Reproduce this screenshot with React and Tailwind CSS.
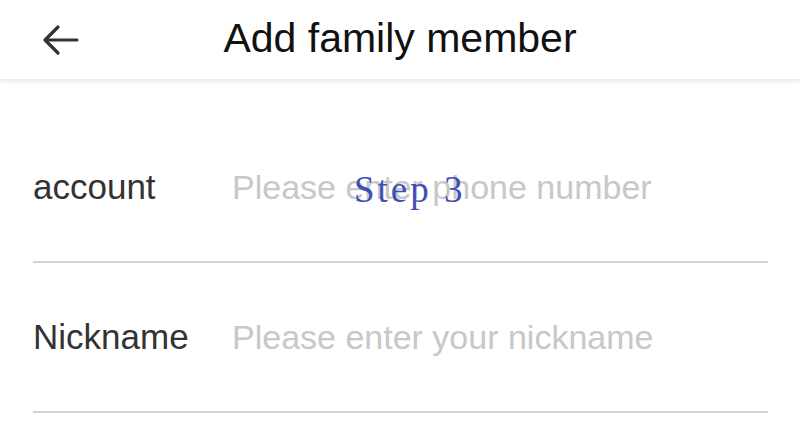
export default function App() {
  const sans = { fontFamily: '"Liberation Sans", Arial, sans-serif' };
  return (
    <div className="relative w-[800px] h-[428px] overflow-hidden bg-white" style={sans}>
      <header className="grid grid-cols-[1fr_auto_1fr] items-center h-[80px] bg-white shadow-[0_2px_4px_rgba(0,0,0,0.08)] border-b border-[#ececec]">
        <div className="pl-[42px] flex items-center">
          <svg width="38" height="32" viewBox="0 0 38 32" fill="none" stroke="#333" strokeWidth="3.2" strokeLinecap="round" strokeLinejoin="round">
            <path d="M35 16H4" />
            <path d="M16 3L3 16l13 13" />
          </svg>
        </div>
        <h1 className="text-[41px] leading-none text-[#111] pb-[2px]">Add family member</h1>
        <div />
      </header>
      <main className="mt-[33px] px-[33px] pr-[32px]">
        <div className="flex items-center h-[150px] border-b-2 border-[#d4d4d4]">
          <span className="w-[199px] text-[35px] text-[#333]">account</span>
          <span className="text-[34px] text-[#c8c8c8]">Please enter phone number</span>
        </div>
        <div className="flex items-center h-[150px] border-b-2 border-[#d4d4d4]">
          <span className="w-[199px] text-[35px] text-[#333]">Nickname</span>
          <span className="text-[34px] text-[#c8c8c8]">Please enter your nickname</span>
        </div>
      </main>
      <div
        className="absolute left-[354px] top-[162px] text-[37px] tracking-[3px] text-[#3f4fb5]"
        style={{ fontFamily: '"Liberation Serif", "Times New Roman", serif' }}
      >
        Step 3
      </div>
    </div>
  );
}
